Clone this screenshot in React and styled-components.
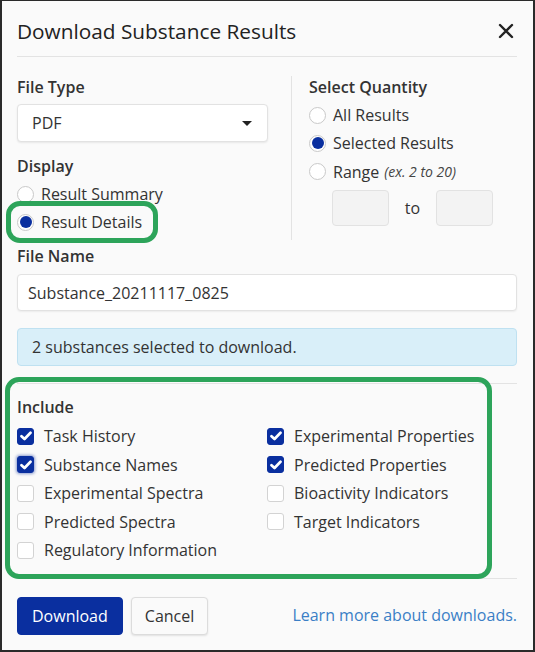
import React from "react";
import styled, { createGlobalStyle } from "styled-components";

const Global = createGlobalStyle`
  html, body { margin: 0; padding: 0; background: #fafafa; }
  * { box-sizing: border-box; }
  body { font-family: "Open Sans", "Noto Sans", sans-serif; color: #333; }
`;

const Frame = styled.div`
  width: 535px;
  height: 652px;
  border: 2px solid #2a2a2a;
  border-top-width: 1px;
  background: #fafafa;
  padding: 0 16px 0 15px;
  display: flex;
  flex-direction: column;
`;

const Header = styled.div`
  height: 56px;
  display: flex;
  align-items: center;
  justify-content: space-between;
  border-bottom: 1px solid #e3e3e3;
  padding-top: 4px;
`;

const Title = styled.h1`
  margin: 0;
  font-size: 20.8px;
  font-weight: 400;
  color: #222;
`;

const CloseButton = styled.button`
  border: 0;
  background: transparent;
  padding: 0;
  width: 18px;
  height: 18px;
  margin-right: 2px;
  display: flex;
  align-items: center;
  justify-content: center;
  cursor: pointer;
`;

const Columns = styled.div`
  display: grid;
  grid-template-columns: 274px 1fr;
  margin-top: 19px;
`;

const LeftCol = styled.div`
  display: flex;
  flex-direction: column;
`;

const RightCol = styled.div`
  display: flex;
  flex-direction: column;
  border-left: 1px solid #e3e3e3;
  padding-left: 17px;
  margin-bottom: -4px;
`;

const Label = styled.div`
  font-size: 16px;
  font-weight: 600;
  line-height: 22px;
  color: #333;
  margin-top: ${(p) => p.$mt || 0}px;
  margin-bottom: ${(p) => p.$mb || 0}px;
`;

const SelectBox = styled.div`
  width: 251px;
  height: 38px;
  background: #fff;
  border: 1px solid #e2e2e2;
  border-radius: 4px;
  box-shadow: 0 1px 2px rgba(0, 0, 0, 0.08);
  display: flex;
  align-items: center;
  justify-content: space-between;
  padding: 0 15px 0 14px;
  font-size: 16px;
  color: #333;
`;

const Caret = styled.span`
  width: 0;
  height: 0;
  border-left: 5px solid transparent;
  border-right: 5px solid transparent;
  border-top: 5px solid #222;
`;

const OptionRow = styled.label`
  position: relative;
  display: flex;
  align-items: center;
  height: ${(p) => p.$h || 28}px;
  font-size: 16px;
  color: #333;
  gap: ${(p) => p.$gap || 7}px;
`;

const Radio = styled.span`
  width: 17px;
  height: 17px;
  border-radius: 50%;
  border: 1px solid #c9c9c9;
  background: #fff;
  display: flex;
  align-items: center;
  justify-content: center;
  flex: none;
  &::after {
    content: "";
    width: 12px;
    height: 12px;
    border-radius: 50%;
    background: ${(p) => (p.$checked ? "#0a2f9f" : "transparent")};
  }
`;

const Highlight = styled.span`
  position: absolute;
  left: -11px;
  top: -7px;
  width: 152px;
  height: 42px;
  border: 5px solid #2da45a;
  border-radius: 14px;
  pointer-events: none;
`;

const Hint = styled.em`
  font-size: 14px;
  color: #444;
  margin-left: -2px;
`;

const RangeRow = styled.div`
  display: flex;
  align-items: center;
  padding-left: 23px;
  margin-top: 4px;
`;

const RangeInput = styled.div`
  width: 57px;
  height: 36px;
  background: #f3f3f3;
  border: 1px solid #e2e2e2;
  border-radius: 4px;
`;

const ToText = styled.span`
  width: 47px;
  text-align: center;
  font-size: 16px;
`;

const TextInput = styled.div`
  height: 37px;
  background: #fff;
  border: 1px solid #e2e2e2;
  border-radius: 4px;
  box-shadow: 0 1px 2px rgba(0, 0, 0, 0.06);
  display: flex;
  align-items: center;
  padding-left: 10px;
  font-size: 16px;
  color: #333;
`;

const Alert = styled.div`
  margin-top: 17px;
  height: 38px;
  background: #d9eff9;
  border: 1px solid #bfe1f1;
  border-radius: 4px;
  display: flex;
  align-items: center;
  padding-left: 14px;
  font-size: 16px;
  color: #333;
`;

const Divider = styled.hr`
  margin: ${(p) => p.$mt || 0}px 0 0;
  border: 0;
  border-top: 1px solid #e3e3e3;
  height: 0;
`;

const IncludeSection = styled.section`
  position: relative;
  padding-top: 12px;
  height: 194px;
`;

const IncludeFrame = styled.span`
  position: absolute;
  left: -12px;
  top: -7px;
  right: 25px;
  bottom: -1px;
  border: 5px solid #2da45a;
  border-radius: 14px;
  pointer-events: none;
`;

const CheckGrid = styled.div`
  display: grid;
  grid-template-columns: 250px 1fr;
  grid-auto-rows: 28.5px;
  margin-top: 4px;
`;

const Box = styled.span`
  width: 17px;
  height: 17px;
  border-radius: 3px;
  flex: none;
  display: flex;
  align-items: center;
  justify-content: center;
  background: ${(p) => (p.$checked ? "#0a2f9f" : "#fff")};
  border: 1px solid ${(p) => (p.$checked ? "#0a2f9f" : "#d3d3d3")};
  box-shadow: ${(p) => (p.$focus ? "0 0 3px 1px rgba(10,47,159,0.45)" : "none")};
`;

const Footer = styled.div`
  display: flex;
  align-items: center;
  padding-top: 18px;
  gap: 8px;
`;

const PrimaryButton = styled.button`
  height: 38px;
  padding: 0 14px;
  background: #0a2f9f;
  color: #fff;
  border: 1px solid #0a2f9f;
  border-radius: 4px;
  font-family: inherit;
  font-size: 16px;
`;

const SecondaryButton = styled.button`
  height: 38px;
  padding: 0 13px;
  background: #fafafa;
  color: #333;
  border: 1px solid #dcdcdc;
  border-radius: 4px;
  box-shadow: 0 1px 2px rgba(0, 0, 0, 0.1);
  font-family: inherit;
  font-size: 16px;
`;

const Link = styled.a`
  margin-left: auto;
  margin-top: -3px;
  color: #3b7fc6;
  font-size: 16px;
  text-decoration: none;
`;

const Check = () => (
  <svg width="12" height="10" viewBox="0 0 12 10">
    <path d="M1.5 5.2 L4.5 8 L10.5 1.8" fill="none" stroke="#fff" strokeWidth="2.7" strokeLinecap="round" strokeLinejoin="round" />
  </svg>
);

const CheckItem = ({ label, checked, focus }) => (
  <OptionRow $h={28.5} $gap={10}>
    <Box $checked={checked} $focus={focus}>{checked && <Check />}</Box>
    {label}
  </OptionRow>
);

const items = [
  ["Task History", true],
  ["Experimental Properties", true],
  ["Substance Names", true, true],
  ["Predicted Properties", true],
  ["Experimental Spectra", false],
  ["Bioactivity Indicators", false],
  ["Predicted Spectra", false],
  ["Target Indicators", false],
  ["Regulatory Information", false],
];

export default function App() {
  return (
    <>
      <Global />
      <Frame>
        <Header>
          <Title>Download Substance Results</Title>
          <CloseButton aria-label="Close">
            <svg width="16" height="16" viewBox="0 0 16 16">
              <path d="M2 2 L14 14 M14 2 L2 14" stroke="#222" strokeWidth="2.4" strokeLinecap="round" />
            </svg>
          </CloseButton>
        </Header>

        <Columns>
          <LeftCol>
            <Label $mb={6}>File Type</Label>
            <SelectBox>
              PDF
              <Caret />
            </SelectBox>
            <Label $mt={13} $mb={3}>Display</Label>
            <OptionRow>
              <Radio />
              Result Summary
            </OptionRow>
            <OptionRow>
              <Radio $checked />
              Result Details
              <Highlight />
            </OptionRow>
          </LeftCol>
          <RightCol>
            <Label $mb={3}>Select Quantity</Label>
            <OptionRow>
              <Radio />
              All Results
            </OptionRow>
            <OptionRow>
              <Radio $checked />
              Selected Results
            </OptionRow>
            <OptionRow $h={29}>
              <Radio />
              Range <Hint>(ex. 2 to 20)</Hint>
            </OptionRow>
            <RangeRow>
              <RangeInput />
              <ToText>to</ToText>
              <RangeInput />
            </RangeRow>
          </RightCol>
        </Columns>

        <Label $mt={9} $mb={7}>File Name</Label>
        <TextInput>Substance_20211117_0825</TextInput>
        <Alert>2 substances selected to download.</Alert>

        <Divider $mt={17} />
        <IncludeSection>
          <Label>Include</Label>
          <CheckGrid>
            {items.map(([label, checked, focus]) => (
              <CheckItem key={label} label={label} checked={checked} focus={focus} />
            ))}
          </CheckGrid>
          <IncludeFrame />
        </IncludeSection>
        <Divider />

        <Footer>
          <PrimaryButton>Download</PrimaryButton>
          <SecondaryButton>Cancel</SecondaryButton>
          <Link href="#">Learn more about downloads.</Link>
        </Footer>
      </Frame>
    </>
  );
}
